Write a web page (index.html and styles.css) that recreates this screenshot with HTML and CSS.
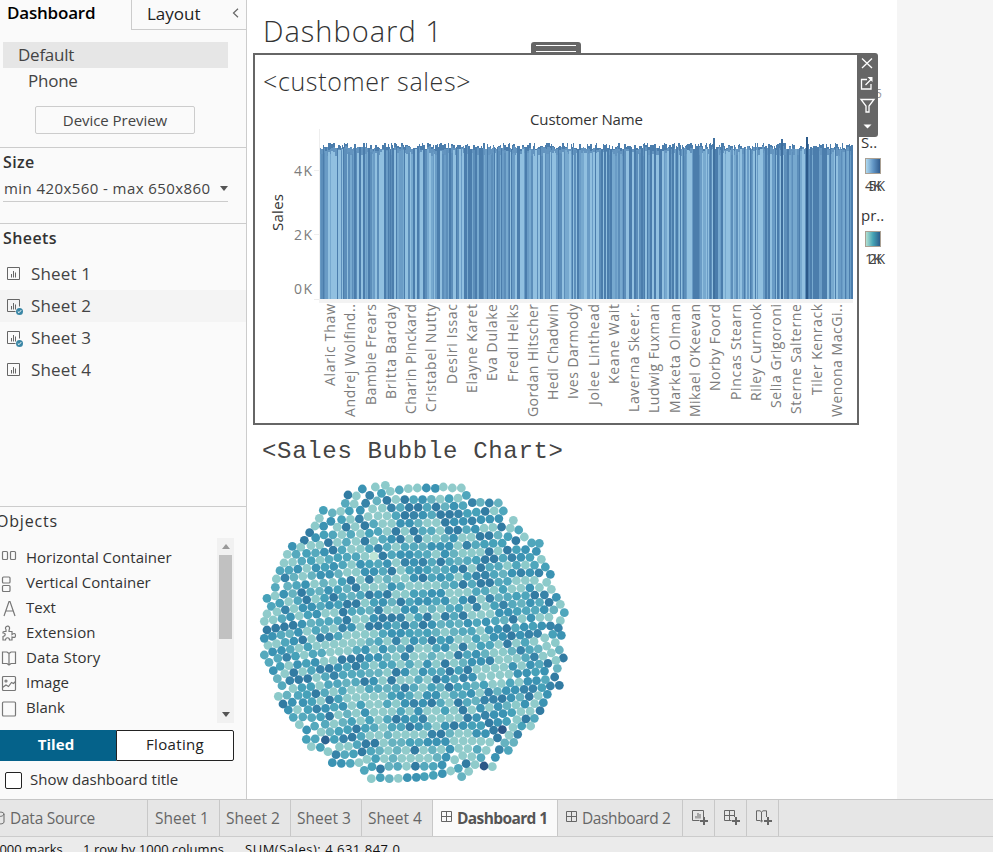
FILE: index.html
```html
<!DOCTYPE html>
<html lang="en">
<head>
<meta charset="utf-8">
<title>Dashboard 1</title>
<link rel="stylesheet" href="styles.css">
</head>
<body>
<svg class="defs" width="0" height="0" aria-hidden="true">
  <defs>
    <symbol id="sheet" viewBox="0 0 16 16"><path d="M.5.5h12v12H.5zM4.5 7v3.5M6.5 4v6.500M8.500 5.500v5" fill="none" stroke="#666"/></symbol>
    <symbol id="used" viewBox="0 0 16 16"><path d="M12.500 7.500v-7H.5v12h8M4.500 7v3.500M6.500 4v6.500M8.500 5.500v5" fill="none" stroke="#666"/><circle cx="12.500" cy="12.500" r="3.500" fill="#3a86a5"/><path d="M10.800 12.500l1.200 1.200 2.200-2.500" fill="none" stroke="#fff"/></symbol>
    <symbol id="grid" viewBox="0 0 12 12"><path d="M.5.5h10v10H.5zM5.500.5v10M.5 5.500h10" fill="none" stroke="#666"/></symbol>
  </defs>
</svg>
<div class="workspace">
  <aside class="sidebar">
    <div class="side-tabs"><div class="side-tab active">Dashboard</div><div class="side-tab other"><span>Layout</span><svg width="7" height="10"><path d="M6 .8L1.500 5 6 9.200" fill="none" stroke="#666" stroke-width="1.200"/></svg></div></div>
    <div class="device selected">Default</div>
    <div class="device phone">Phone</div>
    <div class="preview">Device Preview</div>
    <section class="size"><h2>Size</h2><div class="select"><span>min 420x560 - max 650x860</span><i class="down"></i></div></section>
    <section class="sheets"><h2>Sheets</h2>
      <div class="sheet"><svg><use href="#sheet"/></svg><span>Sheet 1</span></div>
      <div class="sheet hover"><svg><use href="#used"/></svg><span>Sheet 2</span></div>
      <div class="sheet"><svg><use href="#used"/></svg><span>Sheet 3</span></div>
      <div class="sheet"><svg><use href="#sheet"/></svg><span>Sheet 4</span></div>
    </section>
    <section class="objects"><h3>Objects</h3>
      <div class="object-area"><div class="object-list">
        <div><svg viewBox="0 0 16 18"><rect x="1.500" y="2.500" width="5" height="8" rx="1"/><rect x="9.500" y="2.500" width="5" height="8" rx="1"/></svg><span>Horizontal Container</span></div>
        <div><svg viewBox="0 0 16 18"><rect x="1.500" y="3" width="7.500" height="6" rx="1"/><rect x="1.500" y="11.500" width="7.500" height="6" rx="1"/></svg><span>Vertical Container</span></div>
        <div><svg viewBox="0 0 16 18"><path d="M3 17L8 2.500h1L14 17M4.800 12h7.500"/></svg><span>Text</span></div>
        <div class="wide"><svg viewBox="0 0 16 18"><path d="M3 7.500h2V5.500C3 3 7 .5 8.500 3.500c.5 1.200-.7 1.700-.5 4h3v3c2-1.500 3.500-1.500 3.500 1s-1.500 2-3.500 1.500V16H8.500c0-3-4-3-4 0H2v-3.500c3-.5 3-3.500 0-3.500V8z"/></svg><span>Extension</span></div>
        <div class="wide"><svg viewBox="0 0 16 18"><path d="M8 4.500L6 3H1.500v11.500H6L8 16l2-1.500h4.500V3H10zM8 4.500V16"/></svg><span>Data Story</span></div>
        <div><svg viewBox="0 0 16 18"><rect x="1.500" y="2.500" width="13" height="14" rx="1"/><circle cx="5" cy="7" r="1"/><path d="M1.500 13.500L5 11l2.500 1.500 3-4 2 1L14.500 7.500"/></svg><span>Image</span></div>
        <div><svg viewBox="0 0 16 18"><rect x="1.500" y="3" width="13" height="14" rx="1"/></svg><span>Blank</span></div>
      </div><div class="scrollbar"><i class="up"></i><div class="thumb"></div><i class="down"></i></div></div>
      <div class="modes"><div class="tiled">Tiled</div><div class="floating">Floating</div></div>
      <label class="show"><span class="box"></span><span class="label">Show dashboard title</span></label>
    </section>
  </aside>
  <main class="canvas">
    <div class="views">
      <h1>Dashboard 1</h1>
      <div class="frame">
        <div class="handle"></div>
        <div class="view-title">&lt;customer sales&gt;</div>
        <svg class="chart" id="bars" viewBox="255 105 602 318" width="602" height="318"></svg>
        <svg class="tools" width="21" height="84" viewBox="857 53 21 84"><path d="M857 53h18a3 3 0 0 1 3 3v78a3 3 0 0 1-3 3h-18z" fill="#666"/><g fill="none" stroke="#fff" stroke-width="1.300"><path d="M862 58.500l10 9.500M872 58.500l-10 9.500"/><path d="M867 79.500h-5.500v9.500h9.500v-5M865.500 85l6-6"/><path d="M861 99.500h13l-5 6.500v6h-3v-6z"/></g><path d="M867.500 77h5v5zM863.500 124.500h8l-4 4z" fill="#fff"/></svg>
      </div>
      <div class="bubble-title">&lt;Sales Bubble Chart&gt;</div>
      <svg class="bubbles" id="bubbles" viewBox="0 0 960 960" width="320" height="320"></svg>
    </div>
    <div class="legends">
      <div class="peek">5</div>
      <div class="legend-name">S..</div><div class="swatch blue"></div><div class="range"><span>4K</span><span>5K</span></div>
      <div class="legend-name second">pr..</div><div class="swatch teal"></div><div class="range"><span>1K</span><span>2K</span></div>
    </div>
  </main>
</div>
<nav class="tabs">
  <div class="source"><svg width="6" height="14"><path d="M-3 3c0-2.500 7-2.500 7 0v8c0 2.500-7 2.500-7 0M-3 4c1 2 6 2 7-1" fill="none" stroke="#666"/></svg>Data Source</div>
  <div class="t1">Sheet 1</div><div class="t2">Sheet 2</div><div class="t2">Sheet 3</div><div class="t2">Sheet 4</div>
  <div class="current"><svg width="12" height="12"><use href="#grid"/></svg>Dashboard 1</div>
  <div class="dash2"><svg width="12" height="12"><use href="#grid"/></svg>Dashboard 2</div>
  <div class="new"><svg viewBox="0 0 16 16"><path d="M11.500 7V.5H.5v10h7M4 6v2.500M6 3v5.500M8 4v4.500"/><path class="plus" d="M12 7v8M8 11h8"/></svg></div>
  <div class="new"><svg viewBox="0 0 16 16"><path d="M10.500 7V.5H.5v10h7M5.500.5v10M.5 5.500h10"/><path class="plus" d="M12 7v8M8 11h8"/></svg></div>
  <div class="new"><svg viewBox="0 0 16 16"><path d="M5.500 2L4 .8H.5v9.700H4l1.500 1.300L7 10.500M10.500 7V.8H7L5.500 2v9.500"/><path class="plus" d="M12 7v8M8 11h8"/></svg></div>
</nav>
<footer class="status"><span class="marks">1000 marks</span><span class="rows">1 row by 1000 columns</span><span class="sum">SUM(Sales): 4,631,847.0</span></footer>
<script src="charts.js"></script>
</body>
</html>
```
FILE: styles.css
```css
* { box-sizing: border-box; }
body { margin: 0; width: 993px; height: 852px; overflow: hidden; display: flex; flex-direction: column; background: #f5f5f5; color: #333; font-family: "Open Sans", "Liberation Sans", sans-serif; font-size: 15px; white-space: nowrap; }
.defs { position: absolute; }
h1, h2, h3 { margin: 0; font-weight: 400; }
.workspace { height: 799px; display: flex; flex: none; }
.sidebar { width: 247px; flex: none; background: #fafafa; border-right: 1px solid #ccc; overflow: hidden; }
.side-tabs { display: flex; height: 30px; }
.side-tab { height: 30px; line-height: 27px; font-size: 17px; color: #000; }
.active { width: 131px; padding-left: 7px; font-weight: 600; letter-spacing: -.2px; line-height: 25px; }
.other { width: 115px; border-left: 1px solid #ccc; border-bottom: 1px solid #ccc; display: flex; justify-content: space-between; align-items: center; padding: 0 7px 3px 15px; color: #222; }
.device { height: 26px; line-height: 26px; font-size: 17px; margin-left: 3px; width: 225px; color: #444; letter-spacing: -.25px; }
.selected { background: #e6e6e6; margin-top: 12px; padding-left: 15px; }
.phone { padding-left: 25px; letter-spacing: -.25px; }
.preview { width: 160px; height: 28px; margin: 12px 0 0 35px; border: 1px solid #ccc; border-radius: 2px; text-align: center; line-height: 27px; color: #444; letter-spacing: -.05px; }
.size { margin-top: 13px; height: 76px; border-top: 1px solid #ccc; padding: 2px 0 0 3px; }
h2 { font-size: 16px; font-weight: 600; line-height: 25px; height: 25px; letter-spacing: .4px; }
.select { width: 225px; height: 27px; display: flex; align-items: center; justify-content: space-between; border-bottom: 1px solid #ccc; padding: 0 0 0 1px; color: #444; letter-spacing: .42px; }
.down { border: 4px solid transparent; border-top: 5px solid #555; border-bottom: 0; }
.up { border: 4px solid transparent; border-bottom: 5px solid #999; border-top: 0; }
.sheets { height: 283px; border-top: 1px solid #ccc; }
.sheets h2 { margin: 2px 0 7px 3px; }
.sheet { height: 32px; display: flex; align-items: center; font-size: 17px; color: #444; letter-spacing: .15px; }
.sheet svg { width: 16px; height: 16px; margin: 1px 8px 0 7px; }
.sheet, .object-list div { line-height: 24px; }
.hover { background: #f4f4f4; }
.objects { border-top: 1px solid #ccc; height: 293px; }
h3 { font-size: 16px; height: 31px; line-height: 29px; margin-left: -4px; font-weight: 500; letter-spacing: .8px; }
.object-area { height: 185px; display: flex; justify-content: space-between; }
.object-list { padding-top: 7px; }
.object-list div { height: 25px; display: flex; align-items: center; }
.object-list span { padding-bottom: 2px; }
.object-list .wide { letter-spacing: .15px; }
.object-list svg { width: 16px; height: 18px; margin: 0 9px 0 1px; fill: none; stroke: #777; stroke-width: 1.200; }
.scrollbar { width: 17px; margin-right: 12px; background: #f1f1f1; display: flex; flex-direction: column; align-items: center; padding: 6px 0; }
.scrollbar .up { margin-bottom: 6px; }
.thumb { width: 13px; height: 84px; background: #c1c1c1; }
.scrollbar .down { margin-top: auto; }
.modes { display: flex; width: 234px; height: 31px; margin-top: 7px; text-align: center; line-height: 27px; letter-spacing: .35px; }
.tiled { width: 116px; background: #05628a; color: #fff; font-weight: 700; padding: 1px 4px 0 0; letter-spacing: .1px; }
.floating { width: 118px; border: 1px solid #222; border-radius: 0 2px 2px 0; background: #fff; color: #222; }
.show { display: flex; align-items: center; margin: 10px 0 0 5px; height: 19px; }
.show .label { padding-bottom: 3px; }
.box { width: 17px; height: 17px; border: 1px solid #222; border-radius: 2px; background: #fff; margin-right: 8px; }
.canvas { display: flex; width: 650px; background: #fff; height: 799px; overflow: hidden; }
.views { width: 612px; padding-left: 6px; flex: none; }
h1 { height: 53px; padding-left: 10px; font-weight: 350; font-size: 29px; line-height: 62px; letter-spacing: 1px; }
.frame { position: relative; width: 606px; height: 372px; border: 2px solid #666; }
.handle { position: absolute; left: 276px; top: -13px; width: 50px; height: 12px; background: #666; border-radius: 3px 3px 0 0; padding: 3px 5px; }
.handle::before { content: ""; display: block; height: 5px; border-top: 1px solid #fff; border-bottom: 1px solid #fff; }
.view-title { height: 50px; line-height: 52px; padding-left: 8px; font-size: 25px; font-weight: 350; letter-spacing: .65px; }
.chart { display: block; }
.chart text { fill: #7c7c7c; font-size: 14px; font-weight: 400; }
.chart .head { fill: #333; font-size: 15px; }
.tools { position: absolute; left: 602px; top: -2px; }
.bubble-title { font: 24px/54px "Liberation Mono", monospace; letter-spacing: .68px; height: 45px; padding-left: 9px; color: #444; }
.bubbles { display: block; margin-left: 2px; }
.legends { padding-top: 85px; width: 38px; }
.peek { height: 49px; padding-left: 16px; line-height: 18px; font-size: 12px; color: #999; }
.legend-name { height: 24px; line-height: 16px; padding-left: 2px; }
.second { margin-top: 12px; }
.swatch { width: 16px; height: 16px; margin-left: 6px; border: 1px solid #aaa093; }
.blue { background: linear-gradient(90deg, #b0d9ef, #6397c6, #315c8e); }
.teal { background: linear-gradient(90deg, #b3e0d1, #45a4b5, #2c5d8b); }
.range { display: grid; height: 21px; line-height: 23px; font-size: 14px; color: #444; margin-left: 6px; width: 20px; }
.range span { grid-area: 1 / 1; }
.range span:last-child { justify-self: end; }
.tabs { height: 38px; flex: none; display: flex; background: #e6e6e6; border-top: 1px solid #c6c6c6; border-bottom: 1px solid #ccc; color: #666; font-size: 15.500px; line-height: 37px; }
.tabs > div { border-right: 1px solid #c8c8c8; padding-left: 6px; flex: none; height: 36px; display: flex; align-items: center; }
.tabs .source { width: 148px; padding-left: 0; letter-spacing: -.25px; }
.source svg { margin-right: 4px; }
.tabs .t1 { width: 72px; padding-left: 7px; }
.t2 { width: 71px; }
.tabs .current { width: 125px; background: #fafafa; font-weight: 700; color: #555; letter-spacing: -.62px; padding-left: 7px; }
.tabs .dash2 { width: 125px; letter-spacing: -.4px; padding-left: 7px; }
.current svg, .dash2 svg { margin: 0 4px 2px 1px; }
.tabs > .new { width: 32px; padding-left: 9px; }
.new svg { width: 16px; height: 16px; fill: none; stroke: #666; margin-top: 0; }
.plus { stroke-width: 2; }
.status { height: 15px; overflow: hidden; background: #ebebeb; font-size: 13px; line-height: 25px; color: #111; display: flex; }
.marks { width: 84px; margin-left: -8px; }
.rows { width: 161px; margin-left: 7px; letter-spacing: .05px; }
.sum { margin-left: 1px; letter-spacing: .52px; }
```
FILE: charts.js
```js
const NS = 'http://www.w3.org/2000/svg';
const add = (parent, tag, attrs, text) => {
  const el = document.createElementNS(NS, tag);
  for (const key in attrs) el.setAttribute(key, attrs[key]);
  if (text) el.textContent = text;
  parent.append(el);
  return el;
};
let seed = 71;
const rand = () => { seed = (seed * 1664525 + 1013904223) % 4294967296; return seed / 4294967296; };

// Bars by customer
const bars = document.getElementById('bars');
add(bars, 'path', { d: 'M319.500 129v170M314 170.500h6M314 234.500h6M314 299.500h6', stroke: '#eee', fill: 'none' });
add(bars, 'rect', { x: 319, y: 299, width: 534, height: 4, fill: '#f3f3f3' });
const blues = ['#91c0e0', '#91c0e0', '#77a9cf', '#6a9cc6', '#5c8eba', '#4b7dac', '#4b7dac'];
for (let x = 320; x < 853;) {
  const w = rand() < .6 ? 1 : 2;
  const top = 143 + Math.floor(rand() * 7);
  const body = blues[Math.floor(rand() * 7)];
  add(bars, 'rect', { x, y: top, width: w, height: 299 - top, fill: '#4b7dac' });
  const mid = Math.round(Math.max(top, 146 + rand() * 5));
  add(bars, 'rect', { x, y: mid, width: w, height: 299 - mid, fill: '#6394bf' });
  const low = body === '#4b7dac' ? top : Math.round(149 + rand() * 7);
  add(bars, 'rect', { x, y: low, width: w, height: 299 - low, fill: body });
  x += w;
}
[[713, 138, '#40719f'], [781, 139, '#3d6d9d'], [806, 137, '#2b5989']].forEach(([x, y, fill]) =>
  add(bars, 'rect', { x, y, width: 2, height: 299 - y, fill }));
add(bars, 'rect', { x: 853, y: 130, width: 4, height: 170, fill: '#fff' });
add(bars, 'text', { class: 'head', x: 530, y: 125, textLength: 113 }, 'Customer Name');
add(bars, 'text', { class: 'head', transform: 'translate(282.5 231) rotate(-90)', textLength: 37 }, 'Sales');
[['4K', 175.500], ['2K', 239.500], ['0K', 294]].forEach(([t, y]) => add(bars, 'text', { x: 294, y, textLength: 18 }, t));
const names = [['Alaric Thaw', 386], ['Andrej Wolfind..', 417], ['Bambie Frears', 405], ['Britta Barday', 399], ['Charin Pinckard', 414], ['Cristabel Nutty', 412], ['Desiri Issac', 384], ['Elayne Karet', 393], ['Eva Dulake', 381], ['Fredi Helks', 382], ['Gordan Hitscher', 417], ['Hedi Chadwin', 400], ['Ives Darmody', 399], ['Jolee Linthead', 405], ['Keane Wait', 384], ['Laverna Skeer..', 412], ['Ludwig Fuxman', 413], ['Marketa Olman', 413], ['Mikael O’Keevan', 417], ['Norby Foord', 391], ['Pincas Stearn', 400], ['Riley Curnnok', 401], ['Selia Grigoroni', 408], ['Sterne Salterne', 414], ['Tiler Kenrack', 395], ['Wenona MacGi..', 417]];
names.forEach(([name, end], i) => add(bars, 'text', { transform: `translate(${335 + i * 20.28} ${end}) rotate(-90)`, textLength: end - 304 }, name));

// Packed bubbles: the rim is fixed, the inner marks are relaxed to fit
const rim = [[391,46],[406,64],[433,60],[460,56],[487,54],[514,54],[541,55],[565,51],[592,54],[619,54],[634,76],[652,98],[676,97],[703,99],[730,99],[745,123],[775,151],[791,180],[808,201],[830,219],[853,220],[844,244],[859,268],[871,291],[886,313],[875,337],[889,358],[904,382],[916,403],[928,428],[916,452],[910,474],[919,496],[901,518],[913,540],[925,564],[907,595],[899,621],[913,646],[886,648],[877,673],[865,698],[855,722],[838,745],[827,768],[800,768],[788,793],[776,817],[760,841],[733,839],[721,862],[712,890],[687,888],[660,884],[641,904],[620,920],[610,895],[587,903],[562,911],[535,916],[508,920],[484,922],[457,923],[430,925],[403,926],[376,923],[349,926],[328,901],[312,878],[286,880],[259,880],[232,878],[243,854],[219,845],[196,832],[169,830],[154,808],[155,780],[133,764],[115,742],[100,720],[84,702],[70,679],[81,647],[67,626],[55,602],[42,577],[28,555],[39,526],[28,505],[36,480],[28,454],[36,432],[49,409],[36,385],[61,352],[64,327],[75,302],[87,279],[97,253],[112,229],[148,211],[164,188],[180,168],[193,145],[205,121],[232,129],[257,124],[271,100],[279,75],[304,78],[322,57],[361,51]];
const inside = (x, y) => {
  let hit = false;
  for (let i = 0, j = rim.length - 1; i < rim.length; j = i++) {
    const [a, b] = rim[i], [c, d] = rim[j];
    if ((b > y) !== (d > y) && x < (c - a) * (y - b) / (d - b) + a) hit = !hit;
  }
  return hit;
};
const dots = rim.map(([x, y]) => ({ x, y, fixed: true }));
for (let r = -20; r <= 20; r++) {
  for (let c = -19; c <= 19; c++) {
    const u = c * 27 + (r & 1 ? 13.5 : 0);
    const side = Math.max(0, Math.abs(u) - 150);
    const x = 477 + u, y = 512 + r * 23.5 + (u < 0 ? side * .12 : -side * .1);
    if (inside(x, y) && rim.every(p => Math.hypot(p[0] - x, p[1] - y) > 17)) dots.push({ x, y });
  }
}
const relax = rounds => {
  for (let k = 0; k < rounds; k++) {
    for (let i = 0; i < dots.length; i++) {
      for (let j = i + 1; j < dots.length; j++) {
        const a = dots[i], b = dots[j], dx = b.x - a.x, dy = b.y - a.y;
        if (Math.abs(dx) > 27 || Math.abs(dy) > 27) continue;
        const d = Math.hypot(dx, dy);
        if (d >= 27 || d === 0) continue;
        const p = (27 - d) / d * .35;
        if (!a.fixed) { a.x -= dx * p; a.y -= dy * p; }
        if (!b.fixed) { b.x += dx * p; b.y += dy * p; }
      }
    }
  }
};
relax(30);
for (let pass = 0; pass < 2; pass++) {
  for (let y = 50; y < 920; y += 4) {
    for (let x = 30; x < 925; x += 4) {
      if (inside(x, y) && dots.every(p => Math.abs(p.x - x) > 22 || Math.hypot(p.x - x, p.y - y) > 22)) dots.push({ x, y });
    }
  }
  relax(25);
}
const light = [[250,215,45],[300,235,40],[400,150,35],[380,330,45],[640,200,30],[60,440,30],[790,330,45],[690,410,40],[860,525,35],[300,520,40],[230,550,30],[480,440,25],[460,580,40],[640,510,35],[720,610,45],[350,735,70],[380,790,50],[560,730,45],[640,830,60],[200,780,35],[90,640,35]];
const palette = ['#3b93b3', '#3b93b3', '#46a1b9', '#4fa6bc', '#55a9bd', '#66b2c0', '#8ccaca'];
dots.forEach(d => {
  const near = light.some(([x, y, r]) => Math.hypot(d.x - x, d.y - y) < r);
  const v = rand();
  const pick = Math.floor(rand() * palette.length);
  d.fill = v < (near ? .58 : .17) ? '#90cbcb' : v > .94 ? '#3783a8' : palette[pick];
});
const dark = [[279,75],[397,90],[450,84],[465,105],[492,104],[546,102],[450,132],[558,125],[585,126],[564,152],[691,124],[738,174],[676,200],[703,200],[780,206],[768,231],[708,248],[688,275],[714,275],[474,180],[420,185],[488,204],[434,210],[606,177],[267,174],[322,160],[208,215],[222,240],[164,188],[148,211],[327,215],[381,255],[410,298],[339,326],[282,326],[296,348],[342,372],[399,372],[230,374],[150,380],[138,357],[273,395],[299,395],[264,423],[276,443],[345,461],[372,461],[384,440],[410,440],[438,396],[504,324],[554,275],[627,296],[681,302],[624,345],[684,348],[711,348],[654,393],[516,440],[573,444],[627,440],[504,465],[450,465],[531,512],[627,534],[612,558],[572,581],[546,627],[588,605],[642,605],[588,648],[411,627],[426,603],[453,654],[330,632],[303,585],[315,561],[288,563],[261,561],[225,608],[148,519],[195,500],[117,474],[90,475],[63,477],[36,480],[120,615],[133,638],[159,638],[178,660],[219,680],[84,702],[222,725],[423,750],[468,777],[309,780],[279,803],[336,830],[363,828],[324,855],[483,848],[381,897],[488,897],[567,795],[606,768],[648,740],[633,719],[612,696],[528,696],[732,690],[693,762],[708,791],[735,795],[634,879],[810,747],[825,677],[870,576],[849,383],[890,404],[768,440],[752,463],[765,485],[762,527],[925,564],[899,621],[855,722],[913,646]];
const paint = (x, y, fill) => {
  dots.reduce((a, b) => Math.hypot(a.x - x, a.y - y) < Math.hypot(b.x - x, b.y - y) ? a : b).fill = fill;
};
dark.forEach(([x, y]) => paint(x, y, '#327ba2'));
paint(746, 770, '#2c5988'); paint(687, 888, '#2c5988'); paint(207, 810, '#2c6291'); paint(356, 262, '#bde5d6');
const bubbles = document.getElementById('bubbles');
dots.forEach(d => add(bubbles, 'circle', { cx: d.x.toFixed(1), cy: d.y.toFixed(1), r: 13.2, fill: d.fill }));
```
